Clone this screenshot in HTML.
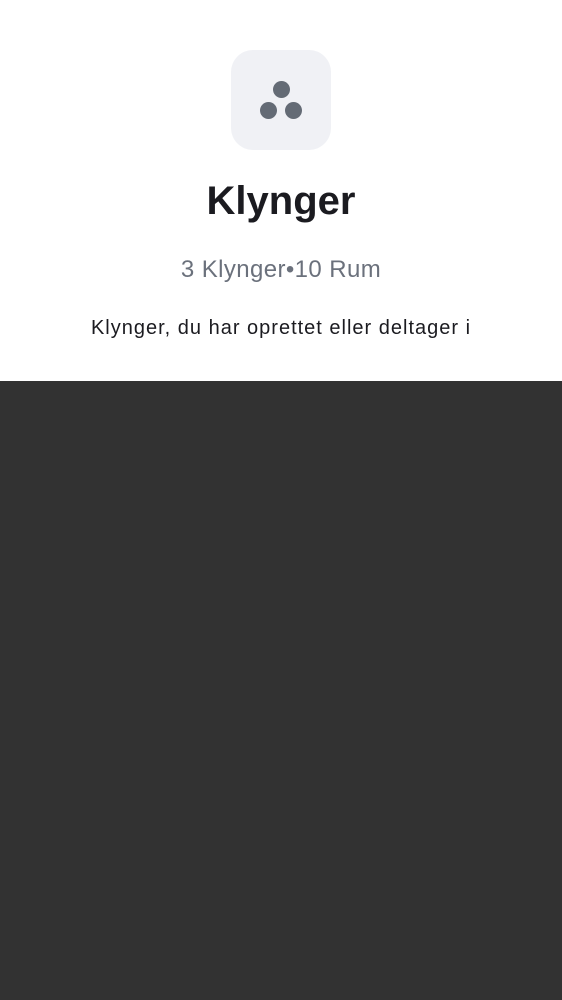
<!DOCTYPE html>
<html><head><meta charset="utf-8"><style>
html,body{margin:0;padding:0;width:562px;height:1000px;overflow:hidden;font-family:"Liberation Sans",sans-serif;background:#fff}
.top{position:absolute;left:0;top:0;width:562px;height:381px;background:#fff}
.icon{position:absolute;left:231px;top:50px;width:100px;height:100px;border-radius:22px;background:#f0f1f5}
.d{position:absolute;width:17px;height:17px;border-radius:50%;background:#646b75}
h1{position:absolute;top:176px;left:0;width:562px;text-align:center;margin:0;font-size:40px;font-weight:bold;color:#1b1b20;line-height:50px}
.sub{position:absolute;top:256px;left:0;width:562px;text-align:center;font-size:24px;letter-spacing:0.4px;color:#6b717c;line-height:28px}
.desc{position:absolute;top:315px;left:0;width:562px;text-align:center;font-size:20px;letter-spacing:1px;color:#1b1b20;line-height:26px}
.dark{position:absolute;left:0;top:381px;width:562px;height:619px;background:#323232}
</style></head><body>
<div class="top">
<div class="icon">
<div class="d" style="left:41.5px;top:30.5px"></div>
<div class="d" style="left:28.5px;top:51.5px"></div>
<div class="d" style="left:53.5px;top:51.5px"></div>
</div>
<h1>Klynger</h1>
<div class="sub">3 Klynger•10 Rum</div>
<div class="desc">Klynger, du har oprettet eller deltager i</div>
</div>
<div class="dark"></div>
</body></html>
